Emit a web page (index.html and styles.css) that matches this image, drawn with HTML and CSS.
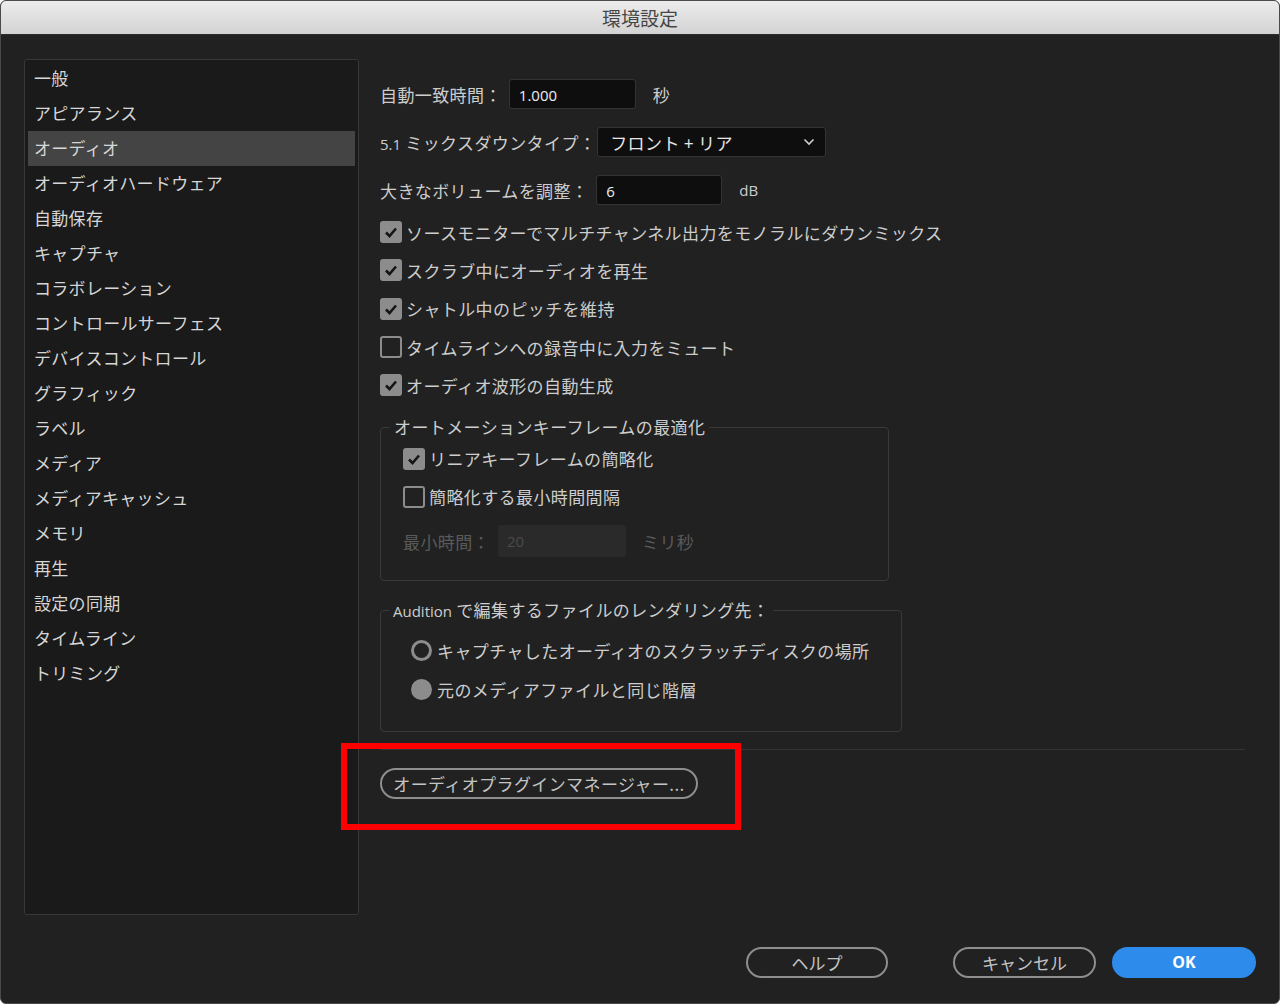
FILE: index.html
```html
<!DOCTYPE html>
<html lang="ja">
<head>
<meta charset="utf-8">
<title>環境設定</title>
<link rel="stylesheet" href="styles.css">
</head>
<body>
<div class="window">
  <div class="titlebar">環境設定</div>
  <div class="content">
    <div class="top">
      <ul class="sidebar">
        <li>一般</li>
        <li>アピアランス</li>
        <li class="selected">オーディオ</li>
        <li>オーディオハードウェア</li>
        <li>自動保存</li>
        <li>キャプチャ</li>
        <li>コラボレーション</li>
        <li>コントロールサーフェス</li>
        <li>デバイスコントロール</li>
        <li>グラフィック</li>
        <li>ラベル</li>
        <li>メディア</li>
        <li>メディアキャッシュ</li>
        <li>メモリ</li>
        <li>再生</li>
        <li>設定の同期</li>
        <li>タイムライン</li>
        <li>トリミング</li>
      </ul>
      <div class="main">
        <div class="row">
          <span class="label">自動一致時間：</span>
          <div class="input w127">1.000</div>
          <span class="unit">秒</span>
        </div>
        <div class="row">
          <span class="label"><span class="lat">5.1</span> ミックスダウンタイプ：</span>
          <div class="select">
            <span>フロント + リア</span>
            <svg class="chev" width="12" height="8" viewBox="0 0 12 8"><polyline points="1.5,1.5 6,6 10.5,1.5" fill="none" stroke="#cfcfcf" stroke-width="1.6"/></svg>
          </div>
        </div>
        <div class="row">
          <span class="label">大きなボリュームを調整：</span>
          <div class="input w126">6</div>
          <span class="unit lat">dB</span>
        </div>

        <div class="checks">
          <div class="check"><span class="box on"><svg width="22" height="22" viewBox="0 0 22 22"><polyline points="6,11.5 9.5,15 16,7.5" fill="none" stroke="#151515" stroke-width="2.6"/></svg></span>ソースモニターでマルチチャンネル出力をモノラルにダウンミックス</div>
          <div class="check"><span class="box on"><svg width="22" height="22" viewBox="0 0 22 22"><polyline points="6,11.5 9.5,15 16,7.5" fill="none" stroke="#151515" stroke-width="2.6"/></svg></span>スクラブ中にオーディオを再生</div>
          <div class="check"><span class="box on"><svg width="22" height="22" viewBox="0 0 22 22"><polyline points="6,11.5 9.5,15 16,7.5" fill="none" stroke="#151515" stroke-width="2.6"/></svg></span>シャトル中のピッチを維持</div>
          <div class="check"><span class="box"></span>タイムラインへの録音中に入力をミュート</div>
          <div class="check"><span class="box on"><svg width="22" height="22" viewBox="0 0 22 22"><polyline points="6,11.5 9.5,15 16,7.5" fill="none" stroke="#151515" stroke-width="2.6"/></svg></span>オーディオ波形の自動生成</div>
        </div>

        <fieldset class="group g1">
          <legend>オートメーションキーフレームの最適化</legend>
          <div class="check"><span class="box on"><svg width="22" height="22" viewBox="0 0 22 22"><polyline points="6,11.5 9.5,15 16,7.5" fill="none" stroke="#151515" stroke-width="2.6"/></svg></span>リニアキーフレームの簡略化</div>
          <div class="check"><span class="box"></span>簡略化する最小時間間隔</div>
          <div class="row disabled">
            <span class="label">最小時間：</span>
            <div class="input dis">20</div>
            <span class="unit">ミリ秒</span>
          </div>
        </fieldset>

        <fieldset class="group g2">
          <legend><span class="lat">Audition</span> で編集するファイルのレンダリング先：</legend>
          <div class="radio"><span class="rb"></span>キャプチャしたオーディオのスクラッチディスクの場所</div>
          <div class="radio"><span class="rb on"></span>元のメディアファイルと同じ階層</div>
        </fieldset>

        <div class="sep"></div>
        <button class="btn plugin">オーディオプラグインマネージャー...</button>
      </div>
    </div>
    <div class="footer">
      <button class="btn help">ヘルプ</button>
      <button class="btn cancel">キャンセル</button>
      <button class="btn ok">OK</button>
    </div>
  </div>
  <div class="annot"></div>
</div>
</body>
</html>
```
FILE: styles.css
```css
* { box-sizing: border-box; }
html, body { margin: 0; padding: 0; background: #ffffff; }
body {
  width: 1280px;
  height: 1004px;
  overflow: hidden;
  font-family: "Noto Sans CJK JP", "Noto Sans", sans-serif;
}
.window {
  position: relative;
  width: 1280px;
  height: 1004px;
  border-radius: 6px;
  overflow: hidden;
  background: #212121;
  border: 1px solid #4a4a4a;
  display: flex;
  flex-direction: column;
}
.titlebar {
  height: 34px;
  flex: 0 0 34px;
  background: linear-gradient(#ececec, #d3d3d3);
  border-bottom: 1px solid #2c2c2c;
  color: #464646;
  font-size: 19px;
  line-height: 33px;
  text-align: center;
}
.content {
  flex: 1;
  display: flex;
  flex-direction: column;
}
.top {
  display: flex;
  padding-top: 24px;
  padding-left: 23px;
}
.sidebar {
  list-style: none;
  margin: 0;
  width: 335px;
  height: 856px;
  padding: 1px 3px;
  background: #1a1a1a;
  border: 1px solid #383838;
  border-radius: 3px;
}
.sidebar li {
  height: 35px;
  line-height: 34px;
  padding-left: 6px;
  font-size: 17px;
  letter-spacing: 0.3px;
  color: #d6d6d6;
}
.sidebar li.selected { background: #444444; }
.main {
  margin-left: 21px;
  width: 865px;
  padding-top: 20px;
  color: #cdcdcd;
  font-size: 17px;
  letter-spacing: 0.4px;
}
.lat { font-family: "Open Sans", "Noto Sans", sans-serif; font-size: 15px; letter-spacing: 0; }
.row {
  display: flex;
  align-items: center;
  height: 30px;
  margin-bottom: 18px;
}
.label { white-space: nowrap; margin-right: 4px; }
.input {
  height: 30px;
  background: #0e0e0e;
  border: 1px solid #343434;
  border-radius: 3px;
  color: #eeeeee;
  font-family: "Open Sans", "Noto Sans", sans-serif;
  font-size: 15px;
  letter-spacing: 0;
  line-height: 30px;
  padding-left: 9px;
}
.w127 { width: 127px; margin-left: 3px; }
.w126 { width: 126px; margin-left: 4px; }
.unit { margin-left: 17px; }
.select {
  width: 229px;
  height: 30px;
  margin-left: -3px;
  background: #0e0e0e;
  border: 1px solid #343434;
  border-radius: 3px;
  display: flex;
  align-items: center;
  justify-content: space-between;
  padding: 0 10px 0 12px;
  color: #e6e6e6;
  font-size: 17px;
}
.chev { display: block; }
.checks { margin-top: -10px; }
.check {
  display: flex;
  align-items: center;
  height: 38.3px;
  color: #cdcdcd;
  white-space: nowrap;
}
.box {
  width: 22px;
  height: 22px;
  flex: 0 0 22px;
  border: 2px solid #8c8c8c;
  border-radius: 3px;
  margin-right: 4px;
  position: relative;
}
.box.on { background: #8c8c8c; border: none; }
.box svg { display: block; }
.group {
  margin: 13px 0 0 0;
  border: 1px solid #3a3a3a;
  border-radius: 4px;
  min-width: 0;
}
.group legend {
  padding: 0 4px;
  line-height: 20px;
  color: #cdcdcd;
  font-size: 17px;
}
.g1 { width: 509px; padding: 2px 10px 23px 22px; }
.g1 legend { margin-left: -13px; }
.g2 { width: 522px; padding: 10px 10px 22px 30px; margin-top: 19px; }
.g2 legend { margin-left: -22px; }
.row.disabled { margin: 9px 0 0 0; height: 32px; color: #5a5a5a; }
.input.dis {
  width: 128px;
  height: 32px;
  margin-left: 4px;
  background: #2a2a2a;
  border: none;
  color: #4a4a4a;
  line-height: 32px;
}
.row.disabled .unit { margin-left: 16px; }
.radio {
  display: flex;
  align-items: center;
  height: 39px;
  white-space: nowrap;
  color: #cdcdcd;
}
.rb {
  width: 21px;
  height: 21px;
  flex: 0 0 21px;
  border: 3px solid #8c8c8c;
  border-radius: 50%;
  margin-right: 5px;
}
.rb.on { background: #8c8c8c; border-color: #8c8c8c; }
.sep {
  margin-top: 17px;
  height: 1px;
  width: 865px;
  background: #333333;
}
.btn {
  font-family: "Noto Sans CJK JP", "Noto Sans", sans-serif;
  height: 31px;
  border: 2px solid #8e8e8e;
  border-radius: 16px;
  background: transparent;
  color: #c4c4c4;
  font-size: 17px;
  line-height: 25px;
  padding: 0;
  display: block;
}
.plugin { margin-top: 18px; width: 318px; letter-spacing: 0.4px; }
.footer {
  display: flex;
  justify-content: flex-end;
  padding: 32px 23px 0 0;
}
.help { width: 142px; margin-right: 65px; }
.cancel { width: 143px; margin-right: 16px; }
.ok {
  width: 144px;
  background: #2d8ceb;
  border-color: #2d8ceb;
  color: #ffffff;
  font-family: "Open Sans", "Noto Sans", sans-serif;
  font-weight: 700;
  font-size: 16px;
}
.annot {
  position: absolute;
  left: 340px;
  top: 742px;
  width: 400px;
  height: 87px;
  border: 6px solid #ff0000;
}
```
